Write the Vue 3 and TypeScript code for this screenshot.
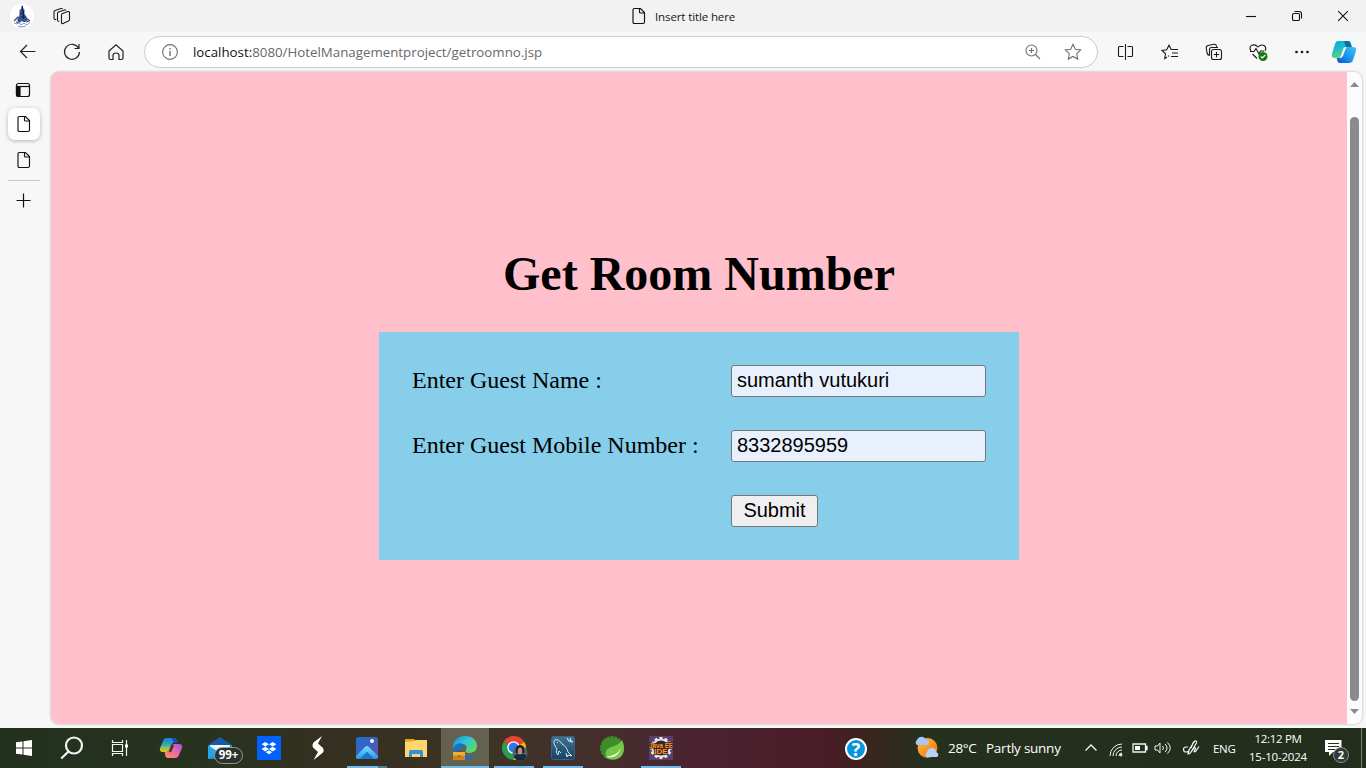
<script setup lang="ts">
import { ref } from 'vue'

const guestName = ref<string>('sumanth vutukuri')
const mobile = ref<string>('8332895959')
const teeth: number[] = Array.from({ length: 12 }, (_, i) => i * 30)
const leafTeeth: number[] = Array.from({ length: 18 }, (_, i) => i * 20)
</script>

<template>
  <div class="screen">
    <header class="titlebar">
      <svg class="avatar" width="24" height="24" viewBox="0 0 24 24">
        <circle cx="12" cy="12" r="12" fill="#fff" />
        <path d="M12 .8l1.500 4 1 1v4l2 3 1 4-3 1.500-3-1-3 1-1.500-2 2-3 .5-3V6l1.500-1z" fill="#3a5790" />
        <path d="M12.500 2v6M13.500 7v8M10 10l3-1M10.500 13h5" stroke="#101d4a" />
        <path d="M4 17l4-4 2 3M6 18l3 1 2-3M16 14l4 3M16 18l3-1" fill="none" stroke="#344f86" stroke-width="1.300" />
        <path d="M4 19l3 1 2-2 2 3 3-2 3 2 3-3M8 22l3 1 5-1" fill="none" stroke="#8299c0" />
      </svg>
      <svg class="workspaces" width="18" height="18" viewBox="0 0 18 18" fill="none" stroke="#1b1b1b" stroke-width="1.100" stroke-linejoin="round">
        <path d="M8.500 6.700l6.500-2.100q1.500-.4 1.500 1v7q0 1-1 1.400l-5.500 2.500q-1.500.5-1.500-1V8q0-1 .8-1.300" />
        <path d="M6.300 14.500l-1-.2q-.8-.3-.8-1.200V6.300q0-1 1-1.400l6-2q1.200-.4 1.500.7" />
        <path d="M3.200 12.800l-1.300-.4Q1 12.100 1 11.200V5q0-1 1-1.400l6-2q1.200-.4 1.500.5" />
      </svg>
      <div class="window-title">
        <svg width="14" height="18" viewBox="0 0 14 18" fill="none" stroke="#111" stroke-width="1.150"><path d="M2.500 1.500h6l4 4v9.500q0 1.500-1.500 1.500H2.500q-1.500 0-1.500-1.500V3q0-1.500 1.500-1.500zM7.500 1.500v3.500q0 1 1 1h4" /></svg>
        <span>Insert title here</span>
      </div>
      <div class="controls">
        <svg viewBox="0 0 12 12"><path d="M1 6.500h10" /></svg>
        <svg viewBox="0 0 12 12"><rect x="1.500" y="3.500" width="7" height="7" rx="1.300" /><path d="M3.500 1.500h4.500q2.500 0 2.500 2.500v4.500" /></svg>
        <svg viewBox="0 0 12 12"><path d="M1.200 1.200l9.600 9.600M10.800 1.200L1.200 10.800" /></svg>
      </div>
    </header>

    <nav class="toolbar">
      <svg class="tool back" viewBox="0 0 18 18"><path d="M16.500 8.500h-15M8 2L1.500 8.500 8 15" /></svg>
      <svg class="tool" viewBox="0 0 18 18"><path d="M15.500 5A7.500 7.500 0 1 0 16.500 9M16 1v4.500h-4.500" /></svg>
      <svg class="tool" viewBox="0 0 18 18"><path d="M2 8l7-6.300L16 8v7q0 1.500-1.500 1.500H12v-4q0-2.500-3-2.500t-3 2.500v4H3.500Q2 16.500 2 15z" /></svg>
      <div class="address">
        <svg class="grey" width="18" height="18" viewBox="0 0 18 18"><circle cx="9" cy="9" r="7.400" /><path d="M9 8v5M9 5v1.400" stroke-width="1.400" /></svg>
        <span class="url"><b>localhost:</b>8080/HotelManagementproject/getroomno.jsp</span>
        <svg class="grey zoom" width="18" height="18" viewBox="0 0 18 18"><circle cx="7.500" cy="7.500" r="5.500" /><path d="M11.500 11.500l4.500 4.500M5 7.500h5M7.500 5v5" /></svg>
        <svg class="grey" width="18" height="18" viewBox="0 0 18 18"><path d="M9 1.300l2.300 4.900 5.400.7-4 3.700 1 5.500L9 13.500l-4.700 2.600 1-5.500-4-3.700 5.400-.7z" /></svg>
      </div>
      <div class="extensions">
        <svg viewBox="0 0 18 18"><path d="M6.500 3.500h-4q-1 0-1 1v8q0 1 1 1h4M10.500 3.500h4q1 0 1 1v8q0 1-1 1h-4M8.500 1v16" /></svg>
        <svg viewBox="0 0 18 18"><path d="M6 14l-2.300 1.500.8-4.700L1 7.500l4.700-.7L8 2.200l2.200 4.300H17M11 10h6M10 13.500h7M7 13.300l1-.6" /></svg>
        <svg viewBox="0 0 18 18"><rect x="6.500" y="6.500" width="10" height="10" rx="2" /><path d="M11.500 8.800v5.400M8.800 11.500h5.400M4.500 12.500Q2.500 12 2 10L1.300 5Q1 3 3 2.500L9 1.300q2-.3 2.500 1.700l.3.800M4.500 12.500V6.500q0-2 2-2H13" /></svg>
        <svg viewBox="0 0 18 18"><path d="M2 8Q-.5 4 3 2.300 6.300 1 9 4q2.700-3 6-1.500Q18 4.500 16 8M3.500 11L8 15.500M1 8.500h4l2-3 3 5.500 1.500-3H15" /><circle cx="14" cy="13.500" r="4.500" fill="#107c10" stroke="none" /><path d="M11.800 13.500l1.500 1.500 3-3" stroke="#fff" /></svg>
        <svg viewBox="0 0 18 18"><g fill="#111" stroke="none"><circle cx="3.500" cy="9" r="1.300" /><circle cx="9" cy="9" r="1.300" /><circle cx="14.500" cy="9" r="1.300" /></g></svg>
      </div>
      <svg class="copilot" width="26" height="24" viewBox="0 0 26 24">
        <defs>
          <linearGradient id="edge-a" x1="0" y1="0" x2=".5" y2="1"><stop stop-color="#00a5df" /><stop offset=".5" stop-color="#23bdc9" /><stop offset="1" stop-color="#72d56f" /></linearGradient>
          <linearGradient id="edge-b" x1="1" y1="0" x2="0" y2="1"><stop stop-color="#47c4f6" /><stop offset=".6" stop-color="#168de9" /><stop offset="1" stop-color="#1744c9" /></linearGradient>
        </defs>
        <path d="M7 1h10q2 0 2.600 2l1.200 4h-6q-2 0-2.600 2L10 16q-.7 2-2.700 2H4q-4 0-3-4L4 4q1-3 3-3z" fill="url(#edge-a)" />
        <path d="M13 1h4q2 0 2.600 2l1.200 4h-6z" fill="#0874a5" />
        <path d="M21 7h1q4 0 3 4l-3 9q-1 3-4 3H9q-2 0-2.600-2l-.8-3h3q2 0 2.600-2l2.500-7q.7-2 2.700-2z" fill="url(#edge-b)" />
        <path d="M13.500 7.500h2.500l-1.500 1.500-2.500 7-1.500 1.500H9l1.500-2z" fill="#f7f7f7" />
      </svg>
    </nav>

    <div class="body">
      <aside class="tabs">
        <svg class="tab-menu" width="16" height="16" viewBox="0 0 16 16" fill="none" stroke="#111" stroke-width="1.200"><rect x="1.500" y="1.500" width="13" height="13" rx="2" /><path d="M1.500 4.500h13" /><path d="M1.500 4.500H5v10H3q-1.500 0-1.500-1.500z" fill="#111" /></svg>
        <div v-for="n in 2" :key="n" class="tab" :class="{ active: n === 1 }">
          <svg width="14" height="18" viewBox="0 0 14 18" fill="none" stroke="#111" stroke-width="1.150"><path d="M2.500 1.500h6l4 4v9.500q0 1.500-1.500 1.500H2.500q-1.500 0-1.500-1.500V3q0-1.500 1.500-1.500zM7.500 1.500v3.500q0 1 1 1h4" /></svg>
        </div>
        <hr />
        <svg class="plus" width="16" height="16" viewBox="0 0 16 16" stroke="#111" stroke-width="1.200"><path d="M.5 7.500h14M7.500 .5v14" /></svg>
      </aside>
      <div class="viewport">
        <main>
          <h1>Get Room Number</h1>
          <form @submit.prevent>
            <label for="guest">Enter Guest Name :</label>
            <input id="guest" v-model="guestName" type="text" />
            <label for="mobile">Enter Guest Mobile Number :</label>
            <input id="mobile" v-model="mobile" type="text" />
            <button type="submit">Submit</button>
          </form>
        </main>
        <div class="scrollbar">
          <svg width="9" height="5" viewBox="0 0 9 5"><path d="M4.500 0L9 5H0z" fill="#8b8b8b" /></svg>
          <i></i>
          <svg width="9" height="5" viewBox="0 0 9 5"><path d="M0 0h9L4.500 5z" fill="#8b8b8b" /></svg>
        </div>
      </div>
    </div>

    <footer class="taskbar">
      <div class="system">
        <div><svg width="16" height="16" viewBox="0 0 16 16" fill="#fff"><path d="M0 2.300L6.500 1.400v6.100H0zM7.500 1.200L16 0v7.500H7.500zM0 8.500h6.500v6.100L0 13.700zM7.500 8.500H16V16l-8.500-1.200z" /></svg></div>
        <div><svg width="24" height="24" viewBox="0 0 24 24" fill="none" stroke="#f4f4f4" stroke-width="2.200"><circle cx="14" cy="9.500" r="8" /><path d="M8.500 15.500l-7.300 7" /></svg></div>
        <div><svg width="18" height="18" viewBox="0 0 18 18" fill="none" stroke="#f4f4f4" stroke-width="1.200"><path d="M1.500 1v2.500h10V1M1.500 17v-2.500h10V17M1.500 5.500h10v7h-10zM15.500 1v16" /><path d="M14 5.500h3v3h-3z" fill="#fff" stroke="none" /></svg></div>
      </div>

      <div class="apps">
        <div>
          <svg width="24" height="24" viewBox="0 0 24 24">
            <defs><linearGradient id="cp-a" x1="0" y1="0" x2="0" y2="1"><stop stop-color="#1b7de2" /><stop offset=".45" stop-color="#31a6ba" /><stop offset=".75" stop-color="#9bc44b" /><stop offset="1" stop-color="#f2c20f" /></linearGradient><linearGradient id="cp-b" x1="1" y1="0" x2="0" y2="1"><stop stop-color="#a450e8" /><stop offset=".5" stop-color="#f06aa4" /><stop offset="1" stop-color="#ff954d" /></linearGradient></defs>
            <path d="M7 2h8q2 0 2.600 2l1 3h-4q-2 0-2.600 2L10 14q-.7 2-2.700 2H4q-4 0-3-4l3-7q1-3 3-3z" fill="url(#cp-a)" /><path d="M13 2h2q2 0 2.600 2l1 3h-4z" fill="#174bc0" />
            <path d="M19 8h1q4 0 3 4l-3 7q-1 3-4 3H9q-2 0-2.600-2l-.8-4h2q2 0 2.600-2l2-4q.7-2 2.700-2z" fill="url(#cp-b)" />
            <path d="M14 9l-3 7" stroke="#29331f" stroke-width="2" />
          </svg>
        </div>
        <div class="mail">
          <svg width="24" height="24" viewBox="0 0 24 24"><path d="M0 9L12 1l12 8v12H0z" fill="#135ba4" /><path d="M2 9h20v8H2z" fill="#f6f7f8" /><path d="M0 9l12 8L24 9v14H0z" fill="#26a8e8" /><path d="M0 23L12 14l12 9z" fill="#1795dc" /></svg>
          <span class="mail-count">99+</span>
        </div>
        <div><svg width="24" height="24" viewBox="0 0 24 24"><path d="M0 0h24v24H0z" fill="#0061fe" /><path d="M8.300 6L12 8.300 8.300 10.600 4.600 8.300zM15.700 6l3.700 2.300-3.700 2.300L12 8.300zM8.300 10.800l3.700 2.300-3.700 2.300-3.700-2.300zM15.700 10.800l3.700 2.300-3.700 2.300-3.700-2.300zM12 14.200l3.200 2L12 18.300l-3.200-2.100z" fill="#fff" /></svg></div>
        <div><svg width="24" height="24" viewBox="0 0 24 24"><path d="M16 0L7.500 6.500Q5.500 9 7 11.500l5 4.500-4.500 8 9-7q2-2.500 .5-5l-5-4.500z" fill="#fff" /></svg></div>
        <div class="open photos">
          <svg width="24" height="24" viewBox="0 0 24 24"><defs><linearGradient id="ph" x2="1" y2="1"><stop stop-color="#1674ce" /><stop offset="1" stop-color="#6a4aae" /></linearGradient><linearGradient id="ph-hill" x2="0" y2="1"><stop stop-color="#74dcff" /><stop offset="1" stop-color="#2798ec" /></linearGradient></defs><rect x="1" y="1" width="22" height="22" rx="2.500" fill="url(#ph)" /><path d="M1 20l9-9q2-2 4 0l9 9v1q0 2-2 2h-2l-7-7-7 7H3q-2 0-2-2z" fill="url(#ph-hill)" /><path d="M5 23l7-7 7 7z" fill="#1876cc" /><circle cx="17" cy="5" r="2" fill="#f3f8ff" /></svg>
        </div>
        <div><svg width="24" height="24" viewBox="0 0 24 24"><path d="M1 3h9l2 2v16H1z" fill="#e9a414" /><path d="M1 6l9-1 2-1h11v17H1z" fill="#ffd66e" /><path d="M5 21v-5q0-2 2-2h10q2 0 2 2v5h-3v-3H8v3z" fill="#3491d1" /></svg></div>
        <div class="open selected">
          <svg width="26" height="26" viewBox="0 0 26 26"><defs><linearGradient id="edge-wave" x2="1" y2=".7"><stop stop-color="#168dcf" /><stop offset=".5" stop-color="#30c5dc" /><stop offset="1" stop-color="#65d55b" /></linearGradient></defs><path d="M1 13C1 5 6 1 13 1c7 0 12 4 12 10 0 5-4 7-8 7-3 0-4-1-3-3 2-4-1-6-4-6-5 0-8 3-9 7z" fill="url(#edge-wave)" /><path d="M1 14c1-6 9-8 12-3-5 0-6 8 0 10 4 2 8 0 11-2-3 5-7 6-12 6C5 25 1 20 1 14z" fill="#1b70c4" /><path d="M1 17h12v8H1z" fill="#ce841c" /><path d="M1 17h12v3.500H1z" fill="#efb038" /><path d="M5 17v-1h4v1" fill="none" stroke="#754507" /><path d="M6.500 20h1v2h-1z" fill="#754507" /></svg>
        </div>
        <div class="open">
          <svg width="26" height="26" viewBox="0 0 26 26"><path d="M13 13L2.600 7A12 12 0 0 1 23.400 7z" fill="#e84235" /><path d="M13 13l10.400-6A12 12 0 0 1 13 25z" fill="#fbbc05" /><path d="M13 13v12A12 12 0 0 1 2.600 7z" fill="#279f50" /><circle cx="12.500" cy="12.500" r="6.300" fill="#fff" /><circle cx="12.500" cy="12.500" r="4.900" fill="#287bee" /><circle cx="19" cy="18" r="7.500" fill="#56606b" /><path d="M12.500 22q2-3 6-3h4q3 1 3 2l-3 4h-7z" fill="#102b48" /><path d="M15 18q-1-8 4-8t4 8z" fill="#171b25" /><ellipse cx="19" cy="16" rx="2.300" ry="3.500" fill="#c28b7e" /></svg>
        </div>
        <div class="open">
          <svg width="24" height="24" viewBox="0 0 24 24"><defs><linearGradient id="db" x2="0" y2="1"><stop stop-color="#3f7493" /><stop offset="1" stop-color="#174163" /></linearGradient></defs><rect x=".5" y=".5" width="23" height="23" rx="2" fill="url(#db)" stroke="#356485" /><path d="M7 19c-2-2-2-4-1-6C3 9 2 5 4 4c3-1 5 1 7 4 4 2 5 5 6 8l4 4-4-1-1 2-1-4M7 19l1-4 2 2M6 6l1 1" fill="none" stroke="#dbe9f2" /><path d="M16 2l2 3 3 1M19 2l1 3 2 1" stroke="#c9e2ef" fill="none" stroke-width="1.300" /></svg>
        </div>
        <div>
          <svg width="26" height="26" viewBox="0 0 26 26"><g fill="#3d8d2b"><rect v-for="a in leafTeeth" :key="a" x="11.500" y="1" width="3" height="5" :transform="`rotate(${a} 13 13)`" /><circle cx="13" cy="13" r="10.800" /></g><path d="M23 5c4 8 2 17-5 19-8 2-13-2-11-8 3-6 11-3 16-11z" fill="#75c64b" /><path d="M6 22q12-1 16-9-3 12-16 9z" fill="#eef8dd" /></svg>
        </div>
        <div class="open ide">
          <svg width="24" height="24" viewBox="0 0 24 24"><path d="M0 0h24v24H0z" fill="#584071" /><g fill="#f1eee9"><rect v-for="a in teeth" :key="a" x="10.500" y="1" width="3" height="4" :transform="`rotate(${a} 12 12)`" /></g><circle cx="12" cy="12" r="8.500" fill="#312a35" stroke="#e4e0df" stroke-width="2" /><text x="12" y="11.500" class="ide-text" textLength="24" lengthAdjust="spacingAndGlyphs">Java EE</text><text x="12" y="18" class="ide-text">IDE</text></svg>
        </div>
      </div>

      <svg class="help" width="24" height="24" viewBox="0 0 24 24"><circle cx="12" cy="13" r="10" fill="#0795df" stroke="#fff" stroke-width="2" /><text x="12" y="19.500" text-anchor="middle" class="question">?</text></svg>
      <div class="weather">
        <svg width="26" height="24" viewBox="0 0 26 24"><defs><linearGradient id="sun" x2="1" y2="1"><stop stop-color="#ffc13a" /><stop offset="1" stop-color="#f26e10" /></linearGradient></defs><circle cx="12.500" cy="12" r="10" fill="url(#sun)" /><path d="M2 9a3 3 0 0 1 0-5q2-4 6-3 3 1 3 3 3 0 3 3 0 2-2 2z" fill="#a9c7f5" /><path d="M12 21q-3-2 0-5 1-4 5-4 4 0 4 4 3 1 2 4l-1 1z" fill="#b6d1fa" /></svg>
        <span class="degree">28°C</span><span class="condition">Partly sunny</span>
      </div>
      <div class="tray">
        <svg width="14" height="14" viewBox="0 0 14 14"><path d="M1.500 9.500L7 4l5.500 5.500" stroke-width="1.400" /></svg>
        <svg class="wifi" width="14" height="14" viewBox="0 0 14 14"><path d="M1 13A12 12 0 0 1 13 1M4 13A9 9 0 0 1 13 4M7 13a6 6 0 0 1 6-6M10 13a3 3 0 0 1 3-3" /><circle cx="12" cy="12" r="1" fill="#fff" /></svg>
        <svg class="battery" width="16" height="12" viewBox="0 0 16 12"><path d="M1 2h12.500v8H1zM14 4.500h1v3h-1z" stroke-width="1.300" /><path d="M3 4h5v4H3z" fill="#fff" stroke="none" /></svg>
        <svg width="18" height="14" viewBox="0 0 18 14"><path d="M1 5h2.500L6 2v10L3.500 9H1zM8.500 5q2 2 0 4M11 3q4 4 0 8M13.500 1.500q5.500 5.500 0 11" /></svg>
        <svg width="18" height="16" viewBox="0 0 18 16"><path d="M6 7H4q-2.500 0-2.500 2.500T4 12q3 0 3-2L12 2q1-1.500 2-1t.5 2L9 12q-1 2-3 2l1-3M9 8l2-5q1-2 2-1M9.500 11.500l3-4q2 0 0 3-1 2 1 1l3.500-5" stroke-width="1.200" /></svg>
      </div>
      <span class="lang">ENG</span>
      <div class="clock"><span>12:12 PM</span><span class="date">15-10-2024</span></div>
      <div class="notices">
        <svg width="17" height="16" viewBox="0 0 17 16"><path d="M0 0h16.500v12H8l-4 4v-4H0z" fill="#fff" /><path d="M3 3.500h11M3 6.500h11M3 9.500h7" stroke="#273020" /></svg>
        <span class="badge">2</span>
      </div>
      <i class="desktop-edge"></i>
    </footer>
  </div>
</template>

<style>
body { margin: 0; overflow: hidden; }
</style>

<style scoped>
* { box-sizing: border-box; }
svg { display: block; flex: none; overflow: visible; }
.screen { width: 1366px; height: 768px; display: flex; flex-direction: column; background: #f7f7f7; font-family: "Open Sans", "Noto Sans", sans-serif; }
.titlebar { height: 32px; display: flex; align-items: center; background: #f2f2f2; flex: none; }
.avatar { margin-left: 10px; }
.workspaces { margin-left: 19px; }
.window-title { display: flex; align-items: center; gap: 9px; width: 120px; margin-left: 561px; font-size: 11.500px; letter-spacing: -.12px; white-space: nowrap; color: #161616; }
.window-title span { padding-top: 1px; }
.controls { display: flex; gap: 34px; margin-left: 493px; }
.controls svg { width: 12px; height: 12px; fill: none; stroke: #111; stroke-width: 1.100; }
.toolbar { height: 39px; display: flex; align-items: center; flex: none; }
.tool { width: 18px; height: 18px; margin-right: 26px; fill: none; stroke: #222; stroke-width: 1.200; }
.back { margin-left: 19px; }
.address { width: 954px; height: 32px; margin-left: -7px; padding: 0 15px 0 16px; display: flex; align-items: center; border: 1px solid #cdcdcd; border-radius: 17px; background: #fff; }
.grey { fill: none; stroke: #707070; stroke-width: 1.100; }
.url { width: 360px; margin-left: 14px; font-size: 13.300px; color: #686868; white-space: nowrap; }
.url b { color: #111; font-weight: 400; }
.zoom { margin: 0 22px 0 auto; }
.extensions { display: flex; gap: 26px; margin-left: 19px; }
.extensions svg { width: 18px; height: 18px; fill: none; stroke: #1b1b1b; stroke-width: 1.100; }
.copilot { margin-left: 20px; }
.body { height: 657px; display: flex; flex: none; }
.tabs { width: 51px; padding: 11px 4px 0 0; display: flex; flex-direction: column; align-items: center; }
.tab-menu { margin-right: 1px; }
.tab { width: 32px; height: 32px; margin-top: 4px; display: flex; align-items: center; justify-content: center; border-radius: 7px; }
.active { margin-top: 10px; background: #fff; box-shadow: 0 1px 4px #0004; }
.tabs hr { width: 32px; height: 1px; border: 0; background: #c9c9c9; margin: 4px 0 12px; }
.viewport { width: 1311px; height: 652px; margin-top: 1px; display: flex; overflow: hidden; border-radius: 8px; background: pink; box-shadow: 0 0 2px 1px #0002; }
main { width: 1296px; display: flex; flex-direction: column; align-items: center; padding-top: 174px; }
h1 { margin: 0 0 31px; color: #000; font: 700 48px/55px "Liberation Serif", serif; }
form { width: 640px; height: 228px; padding: 33px; display: grid; grid-template-columns: 286px 255px; grid-template-rows: repeat(3, 32px); gap: 33px; background: skyblue; }
label { color: #000; font: 24px/31px "Liberation Serif", serif; white-space: nowrap; }
input, button { height: 32px; border: 1px solid #767676; border-radius: 3px; font: 20px "Liberation Sans", sans-serif; color: #000; }
input { width: 255px; padding: 0 5px 2px; background: #e8f0fe; }
button { grid-column: 2; width: 87px; padding: 0 0 2px; background: #efefef; }
.scrollbar { width: 15px; padding: 10px 0 10px; display: flex; flex-direction: column; align-items: center; background: #fcfcfc; }
.scrollbar i { width: 9px; height: 584px; margin: 30px 0 8px; border-radius: 5px; background: #8b8b8b; }
.taskbar { height: 40px; display: flex; align-items: center; color: #fff; background: linear-gradient(90deg, #22311e 0, #28321f 200px, #35301f 340px, #3d3425 490px, #452d2e 620px, #4a2230 700px, #491d28 830px, #38261d 875px, #25301e 925px, #222d1c 100%); }
.system { display: grid; grid-template-columns: repeat(3, 48px); }
.system div, .apps > div { height: 40px; display: flex; align-items: center; justify-content: center; }
.apps { margin-left: 2px; display: grid; grid-template-columns: repeat(11, 49px); }
.mail { position: relative; }
.mail-count { position: absolute; left: 19px; top: 19px; width: 29px; height: 17px; border: 1px solid #929992; border-radius: 9px; background: #293330; font: 700 11.500px/14px "Open Sans", sans-serif; text-align: center; }
.open { background: linear-gradient(#76b9ed, #76b9ed) center bottom / 40px 2px no-repeat; }
.selected { background: linear-gradient(#76b9ed, #76b9ed) center bottom / 48px 2px no-repeat, linear-gradient(#64614f, #64614f) center / 48px 40px no-repeat; }
.photos { background: linear-gradient(90deg, #76b9ed 31px, #527c9d 31px) 5px bottom / 40px 2px no-repeat; }
.ide-text { fill: #ff9a32; stroke: #3a1d14; stroke-width: 1.500px; paint-order: stroke; font: 700 8px "Liberation Sans", sans-serif; text-anchor: middle; }
.help { margin-left: 159px; }
.question { font: 700 18px "Open Sans", sans-serif; fill: #fff; }
.weather { display: flex; align-items: center; width: 150px; margin-left: 47px; font-size: 13.500px; white-space: nowrap; }
.degree { width: 38px; margin-left: 7px; letter-spacing: -.3px; }
.condition { letter-spacing: -.25px; }
.tray { display: flex; align-items: center; gap: 10px; margin-left: 19px; }
.tray svg { fill: none; stroke: #f4f4f4; }
.tray .wifi { margin: 3px -1px 0 1px; }
.tray .battery { margin-right: -4px; }
.lang { width: 25px; margin-left: 13px; font-size: 11.500px; letter-spacing: -.3px; }
.clock { display: flex; flex-direction: column; align-items: center; width: 60px; margin-left: 10px; padding-bottom: 1px; font-size: 11.500px; line-height: 18px; letter-spacing: -.3px; white-space: nowrap; }
.date { letter-spacing: -.2px; }
.notices { position: relative; width: 24px; height: 30px; margin-left: 17px; padding-top: 7px; }
.badge { position: absolute; left: 8px; top: 14px; width: 16px; height: 16px; border: 1px solid #8d918d; border-radius: 50%; background: #343936; text-align: center; font: 700 11px/14px "Open Sans", sans-serif; }
.desktop-edge { margin-left: auto; margin-right: 4px; width: 1px; height: 40px; background: #788078; }
</style>
